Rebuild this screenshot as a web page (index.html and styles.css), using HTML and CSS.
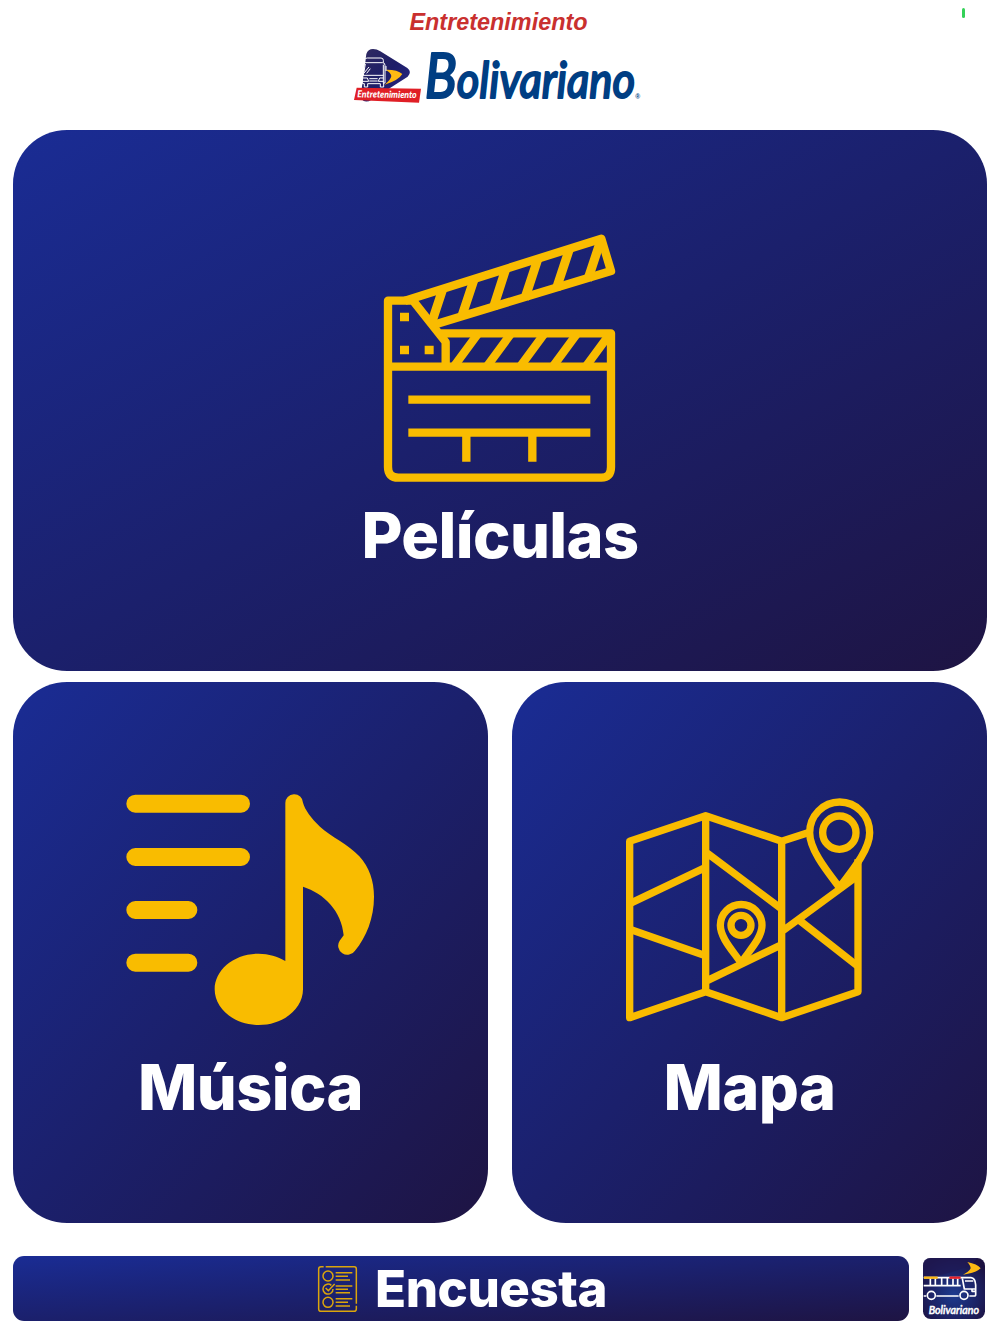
FILE: index.html
```html
<!DOCTYPE html>
<html lang="es">
<head>
    <title>Entretenimiento</title>
    <meta charset="UTF-8">
    <link rel="stylesheet" href="styles.css">
</head>
<body>
<header>
    <h1>Entretenimiento</h1>
    <span class="status"></span>
    <svg class="logo" viewBox="36 141 888 174">
        <defs>
            <linearGradient id="play" x1="0" y1="0" x2="1" y2="1">
                <stop offset="0" stop-color="#302a60"/>
                <stop offset=".5" stop-color="#1d1d68"/>
                <stop offset="1" stop-color="#2b2b8c"/>
            </linearGradient>
        </defs>
        <path fill="url(#play)" d="M79 162Q84 147 99 147Q110 147 121 154L202 204Q217 216 203 230L95 299Q76 311 65 298Q62 294 63 282Z"/>
        <path fill="#fdb913" d="M136 209Q172 208 187 222Q176 241 134 254Q153 238 154 228Q153 218 136 209Z"/>
        <!-- bus -->
        <g fill="none" stroke="#fff" stroke-width="3" stroke-linejoin="round">
            <path d="M74 188V179Q75 174 82 174H123Q130 174 130 181V188M69 194Q69 188 75 188H128Q135 188 135 196V249H131V261H121V251H83V261H73V251H67V230Z"/>
            <path d="M67 226H131M76 192L70 226M130 194V250M69 234H82L86 244H67M131 234H119L115 244H131M88 236H113M88 243H113M72 219L87 201M80 220L91 206"/>
            <path d="M138 198V213M64 200L63 212"/>
        </g>
        <path fill="#e01f26" d="M50 263L243 266L237 308L42 300Z"/>
        <text class="tag" x="52" y="292" textLength="178" lengthAdjust="spacingAndGlyphs" transform="rotate(.8 52 292)">Entretenimiento</text>
        <!-- wordmark -->
        <text class="wordmark" x="254" y="294" textLength="631" lengthAdjust="spacingAndGlyphs"><tspan class="cap">B</tspan>olivariano</text>
        <text class="reg" x="886" y="297">®</text>
    </svg>
</header>

<main>
    <div class="card wide">
        <svg class="icon" width="234" height="250" viewBox="39 39 702 750">
            <g fill="none" stroke="#f9bc00" stroke-width="25" stroke-linejoin="round">
                <path d="M213 340H723V741Q723 773 694 773H85Q54 773 54 741V242H129L227 366V440"/>
                <path d="M54 440H723"/>
                <path d="M115 539H661M115 638H661M289 638V725M487 638V725"/>
                <path d="M105 242L694 56L723 153L192 314"/>
                <path stroke-width="27" d="M219 205L186 305M313 176L274 293M408 145L369 266M504 116L464 237M599 85L558 209M694 56L653 180"/>
                <path d="M325 340L251 440M424 340L350 440M524 340L450 440M622 340L548 440M721 340L647 440"/>
            </g>
            <path fill="#f9bc00" d="M90 278H117V304H90ZM90 377H117V403H90ZM164 377H191V403H164Z"/>
        </svg>
        <p>Películas</p>
    </div>

    <div class="row">
        <div class="card">
            <svg class="icon" width="253" height="250" viewBox="42 15 759 750">
                <path fill="none" stroke="#f9bc00" stroke-width="54" stroke-linecap="round" d="M76 71H393M76 231H393M76 390H235M76 548H235"/>
                <path fill="#f9bc00" d="M526 543V70A26.500 26.500 0 0 1 579 68C584 88 604 115 630 140C664 171 714 192 748 229C778 262 792 304 792 350C792 414 769 471 735 512A27 27 0 0 1 689 482L701 466C695 393 642 340 579 320V628C579 687 520 735 446 735C373 735 314 687 314 628C314 569 373 521 446 521C476 521 503 530 526 543Z"/>
            </svg>
            <p>Música</p>
        </div>
        <div class="card">
            <svg class="icon" width="251" height="250" viewBox="42 15 753 750">
                <g fill="none" stroke="#f9bc00" stroke-width="22" stroke-linejoin="round">
                    <path d="M594 158L515 184L287 107L59 184V713L287 635L515 713L744 635V238"/>
                    <path d="M287 107V635M515 184V713M59 371L287 262M59 448L287 527M287 216L515 387M287 604L515 494M515 455L744 287M567 420L744 559"/>
                    <path d="M688 322C654 277 599 211 599 158A89 91 0 0 1 779 158C779 211 722 277 688 322Z"/>
                    <circle cx="688" cy="158" r="50"/>
                    <path d="M393 549C372 516 331 475 331 436A62 62 0 0 1 456 436C456 475 414 516 393 549Z"/>
                    <circle cx="393" cy="436" r="30"/>
                </g>
                <path fill="#f9bc00" d="M688 325L744 238V295Z"/>
            </svg>
            <p>Mapa</p>
        </div>
    </div>
</main>

<footer>
    <div class="survey">
        <svg width="41" height="48" viewBox="48 57 123 144">
            <g fill="none" stroke="#dba50c" stroke-width="4.500">
                <path d="M74 62H160Q166 62 166 69V173M166 179V189Q166 196 159 196H60Q53 196 53 189V69Q53 62 60 62H68"/>
                <circle cx="81" cy="90" r="15"/>
                <path d="M91 118A15 15 0 1 0 96 129M74 126L82 134L101 114"/>
                <circle cx="81" cy="169" r="15"/>
                <path d="M104 80H154M104 91H141M104 102H147M104 120H154M104 130H141M104 140H147M104 158H154M104 169H141M104 180H147"/>
            </g>
        </svg>
        <span>Encuesta</span>
    </div>
    <svg class="app" width="62" height="61" viewBox="99 39 186 183">
        <defs>
            <radialGradient id="night" cx=".5" cy=".6" r=".65">
                <stop offset="0" stop-color="#1d3a8e"/>
                <stop offset=".55" stop-color="#1c2468"/>
                <stop offset="1" stop-color="#1c1140"/>
            </radialGradient>
        </defs>
        <rect x="99" y="39" width="186" height="183" rx="23" fill="url(#night)"/>
        <path fill="#201a56" d="M99 110V62Q99 39 122 39H262Q235 78 99 100Z" opacity=".7"/>
        <path fill="#fdb913" d="M232 51Q262 57 272 70Q258 84 219 89Q239 79 242 70Q242 62 232 51Z"/>
        <g fill="none" stroke="#fff" stroke-width="5" stroke-linejoin="round">
            <path d="M101 98H243Q256 99 257 120V149Q257 153 251 153H238M206 153H139M109 153H101"/>
            <path d="M101 122H212M121 98V122M136 98V122M155 98V122M172 98V122M189 98V122M203 98V122M217 100L223 132H255M225 108H250M246 132V139H257"/>
            <circle cx="124" cy="151" r="12"/>
            <circle cx="222" cy="151" r="12"/>
        </g>
        <path stroke="#fdb913" stroke-width="7" d="M102 98H143"/>
        <path stroke="#e8202a" stroke-width="7" d="M178 98H212"/>
        <text class="app-name" x="116" y="207" textLength="151" lengthAdjust="spacingAndGlyphs">Bolivariano</text>
    </svg>
</footer>
</body>
</html>
```
FILE: styles.css
```css
body {
    margin: 0;
    background: white;
    font-family: Inter, "Liberation Sans", sans-serif;
    color: white;
}

header {
    position: relative;
    display: flex;
    flex-direction: column;
    align-items: center;
    height: 130px;
}

h1 {
    margin: 8px 3px 0 0;
    font: italic bold 23.400px/29px "Liberation Sans", Arial, sans-serif;
    color: #c9302f;
}

.status {
    position: absolute;
    top: 8px;
    left: 961.500px;
    width: 3px;
    height: 10px;
    border-radius: 2px;
    background: #34d158;
}

.logo {
    width: 296px;
    height: 58px;
    margin-top: 10px;
    overflow: visible;
}

.tag {
    font: italic 900 29px Lato, sans-serif;
    fill: white;
}

.wordmark {
    font: italic 500 152px Lato, sans-serif;
    fill: #003e83;
    stroke: #003e83;
    stroke-width: 6;
    stroke-linejoin: round;
}

.wordmark .cap {
    font-size: 186px;
}

.reg {
    font: bold 20px "Liberation Sans", sans-serif;
    fill: #003e83;
}

main {
    display: flex;
    flex-direction: column;
    gap: 11px;
    padding: 0 13px;
}

.row {
    display: flex;
    gap: 24px;
}

.card {
    box-sizing: border-box;
    display: flex;
    flex: 1;
    flex-direction: column;
    align-items: center;
    height: 541px;
    padding-top: 103px;
    border-radius: 54px;
    background: linear-gradient(to bottom right, #1a2c94, #1b206c 50%, #1e1443);
}

.wide {
    flex: none;
}

.icon {
    display: block;
    flex: none;
}

.card p {
    margin: 14px 0 0;
    font-size: 63px;
    font-weight: 800;
    line-height: 76px;
    letter-spacing: -.600px;
}

footer {
    display: flex;
    align-items: center;
    gap: 14px;
    padding: 33px 15px 0 13px;
}

.survey {
    box-sizing: border-box;
    display: flex;
    flex: 1;
    align-items: center;
    justify-content: center;
    gap: 17px;
    height: 65px;
    padding-left: 2px;
    border-radius: 11px;
    background: linear-gradient(to bottom right, #1a2c94, #1b206c 50%, #1e1443);
    font-size: 51px;
    font-weight: 800;
    letter-spacing: -.500px;
}

.app {
    display: block;
    overflow: visible;
}

.app-name {
    font: italic 500 35px Lato, sans-serif;
    fill: white;
    stroke: white;
    stroke-width: 1.500;
}
```
